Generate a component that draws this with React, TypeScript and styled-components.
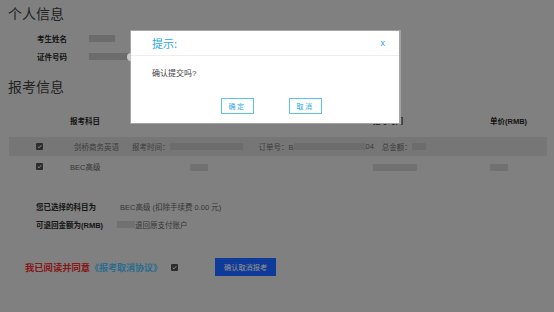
import styled, { createGlobalStyle } from 'styled-components';

const GlobalStyle = createGlobalStyle`
  html, body {
    margin: 0;
    padding: 0;
    background: #d5d5d5;
  }
  body {
    font-family: "Liberation Sans", "Noto Sans CJK SC", sans-serif;
    color: #3e3e3e;
  }
`;

const Page = styled.div`
  width: 554px;
  height: 312px;
  padding-top: 5px;
  box-sizing: border-box;
  overflow: hidden;
`;

const SectionTitle = styled.div<{ $mt?: number }>`
  margin-top: ${(p) => p.$mt ?? 0}px;
  padding-left: 8px;
  font-size: 14px;
  line-height: 18px;
  color: #3a3a3a;
`;

const InfoList = styled.div`
  margin-top: 6px;
  padding-left: 37px;
`;

const InfoRow = styled.div`
  display: flex;
  align-items: center;
  height: 18px;
`;

const Label = styled.span<{ $w?: number }>`
  width: ${(p) => p.$w ?? 52}px;
  font-size: 7.5px;
  font-weight: bold;
  color: #262626;
  white-space: nowrap;
`;

const Blur = styled.span<{ $w: number; $shade?: string }>`
  display: inline-block;
  width: ${(p) => p.$w}px;
  height: 7px;
  background: ${(p) => p.$shade ?? '#b4b4b4'};
  filter: blur(0.7px);
  vertical-align: middle;
`;

const Table = styled.div`
  margin-top: 15px;
  padding-left: 9px;
  width: 538px;
`;

const GridRow = styled.div<{ $h?: number }>`
  display: grid;
  grid-template-columns: 61px 120px 183px 117px 1fr;
  align-items: center;
  height: ${(p) => p.$h ?? 19}px;
  font-size: 7.5px;
  color: #5a5a5a;
`;

const HeadCell = styled.span`
  font-weight: bold;
  color: #262626;
`;

const CheckCell = styled.span`
  padding-left: 27px;
  display: flex;
  align-items: center;
`;

const OrderRow = styled.div`
  display: flex;
  align-items: center;
  height: 19px;
  margin-top: 8px;
  margin-bottom: 1px;
  padding-left: 27px;
  background: #c5c5c5;
  font-size: 7.5px;
  color: #666;
  white-space: nowrap;
`;

const Piece = styled.span<{ $ml?: number }>`
  margin-left: ${(p) => p.$ml ?? 0}px;
  display: inline-flex;
  align-items: center;
`;

const Box = styled.span`
  display: inline-flex;
  align-items: center;
  justify-content: center;
  width: 7px;
  height: 7px;
  border-radius: 1px;
  background: #4a4a4a;
`;

const Summary = styled.div`
  margin-top: 21px;
  padding-left: 36px;
`;

const SummaryRow = styled.div`
  display: flex;
  align-items: center;
  height: 18px;
  font-size: 7.5px;
  color: #5a5a5a;
  white-space: nowrap;
`;

const AgreeRow = styled.div`
  display: flex;
  align-items: center;
  margin-top: 25px;
  padding-left: 25px;
  height: 18px;
`;

const AgreeText = styled.span`
  font-size: 9.3px;
  font-weight: bold;
  color: #e02a2a;
  font-family: "Noto Sans CJK SC", sans-serif;
`;

const AgreeLink = styled.span`
  font-size: 9px;
  font-weight: bold;
  color: #45b6ee;
  font-family: "Noto Sans CJK SC", sans-serif;
`;

const SubmitButton = styled.button`
  margin-left: 37px;
  width: 61px;
  height: 18px;
  padding: 0;
  border: none;
  background: #1862ff;
  color: #f0f0f0;
  font-size: 7.2px;
  font-family: "Noto Sans CJK SC", sans-serif;
`;

const Overlay = styled.div`
  position: fixed;
  inset: 0;
  background: rgba(0, 0, 0, 0.4);
`;

const Dialog = styled.div`
  position: fixed;
  left: 130px;
  top: 30px;
  width: 271px;
  height: 94px;
  box-sizing: border-box;
  background: #fff;
  border: 1px solid #a4a4a4;
  border-right-width: 2px;
`;

const Tab = styled.span`
  position: absolute;
  left: -4px;
  top: 22px;
  width: 4px;
  height: 8px;
  border-radius: 4px 0 0 4px;
  background: #c8c8c8;
`;

const DialogHead = styled.div`
  display: flex;
  align-items: center;
  justify-content: space-between;
  height: 24px;
  padding: 0 14px 0 21px;
  border-bottom: 1px solid #eeeeee;
`;

const DialogTitle = styled.span`
  font-size: 11px;
  color: #29a9df;
  font-family: "Noto Sans CJK SC", sans-serif;
`;

const Close = styled.span`
  font-size: 9px;
  color: #29a9df;
`;

const DialogBody = styled.div`
  padding: 11px 0 0 21px;
  font-size: 8px;
  color: #444;
  height: 18px;
`;

const DialogButtons = styled.div`
  display: flex;
  justify-content: center;
  gap: 35px;
  margin-top: 13px;
  padding-left: 12px;
`;

const DialogButton = styled.button`
  width: 33px;
  height: 16px;
  padding: 0;
  background: #fff;
  border: 1px solid #5bc0eb;
  color: #29a9df;
  font-size: 7px;
  letter-spacing: 1.5px;
  font-family: "Noto Sans CJK SC", sans-serif;
`;

function Check() {
  return (
    <Box>
      <svg width="5" height="5" viewBox="0 0 10 10">
        <path d="M1.5 5.2 L4 7.6 L8.6 2.4" fill="none" stroke="#fff" strokeWidth="1.8" />
      </svg>
    </Box>
  );
}

export default function App() {
  return (
    <>
      <GlobalStyle />
      <Page>
        <SectionTitle>个人信息</SectionTitle>
        <InfoList>
          <InfoRow>
            <Label>考生姓名</Label>
            <Blur $w={26} />
          </InfoRow>
          <InfoRow>
            <Label>证件号码</Label>
            <Blur $w={40} />
          </InfoRow>
        </InfoList>

        <SectionTitle $mt={13}>报考信息</SectionTitle>
        <Table>
          <GridRow $h={18}>
            <span />
            <HeadCell>报考科目</HeadCell>
            <span />
            <HeadCell>报考时间</HeadCell>
            <HeadCell>单价(RMB)</HeadCell>
          </GridRow>
          <OrderRow>
            <Check />
            <Piece $ml={31}>剑桥商务英语</Piece>
            <Piece $ml={13}>报考时间：</Piece>
            <Blur $w={73} />
            <Piece $ml={16}>订单号：B</Piece>
            <Blur $w={72} />
            <Piece>04</Piece>
            <Piece $ml={8}>总金额：</Piece>
            <Blur $w={14} />
          </OrderRow>
          <GridRow>
            <CheckCell>
              <Check />
            </CheckCell>
            <span>BEC高级</span>
            <span>
              <Blur $w={18} $shade="#bcbcbc" />
            </span>
            <span>
              <Blur $w={44} $shade="#bcbcbc" />
            </span>
            <span>
              <Blur $w={18} $shade="#bcbcbc" />
            </span>
          </GridRow>
        </Table>

        <Summary>
          <SummaryRow>
            <Label $w={84}>您已选择的科目为</Label>
            <span>BEC高级 (扣除手续费 0.00 元)</span>
          </SummaryRow>
          <SummaryRow>
            <Label $w={81}>可退回金额为(RMB)</Label>
            <Blur $w={18} $shade="#bcbcbc" />
            <span>退回原支付账户</span>
          </SummaryRow>
        </Summary>

        <AgreeRow>
          <AgreeText>我已阅读并同意</AgreeText>
          <AgreeLink>《报考取消协议》</AgreeLink>
          <Piece $ml={9}>
            <Check />
          </Piece>
          <SubmitButton>确认取消报考</SubmitButton>
        </AgreeRow>
      </Page>

      <Overlay />
      <Dialog>
        <Tab />
        <DialogHead>
          <DialogTitle>提示:</DialogTitle>
          <Close>x</Close>
        </DialogHead>
        <DialogBody>确认提交吗?</DialogBody>
        <DialogButtons>
          <DialogButton>确定</DialogButton>
          <DialogButton>取消</DialogButton>
        </DialogButtons>
      </Dialog>
    </>
  );
}
